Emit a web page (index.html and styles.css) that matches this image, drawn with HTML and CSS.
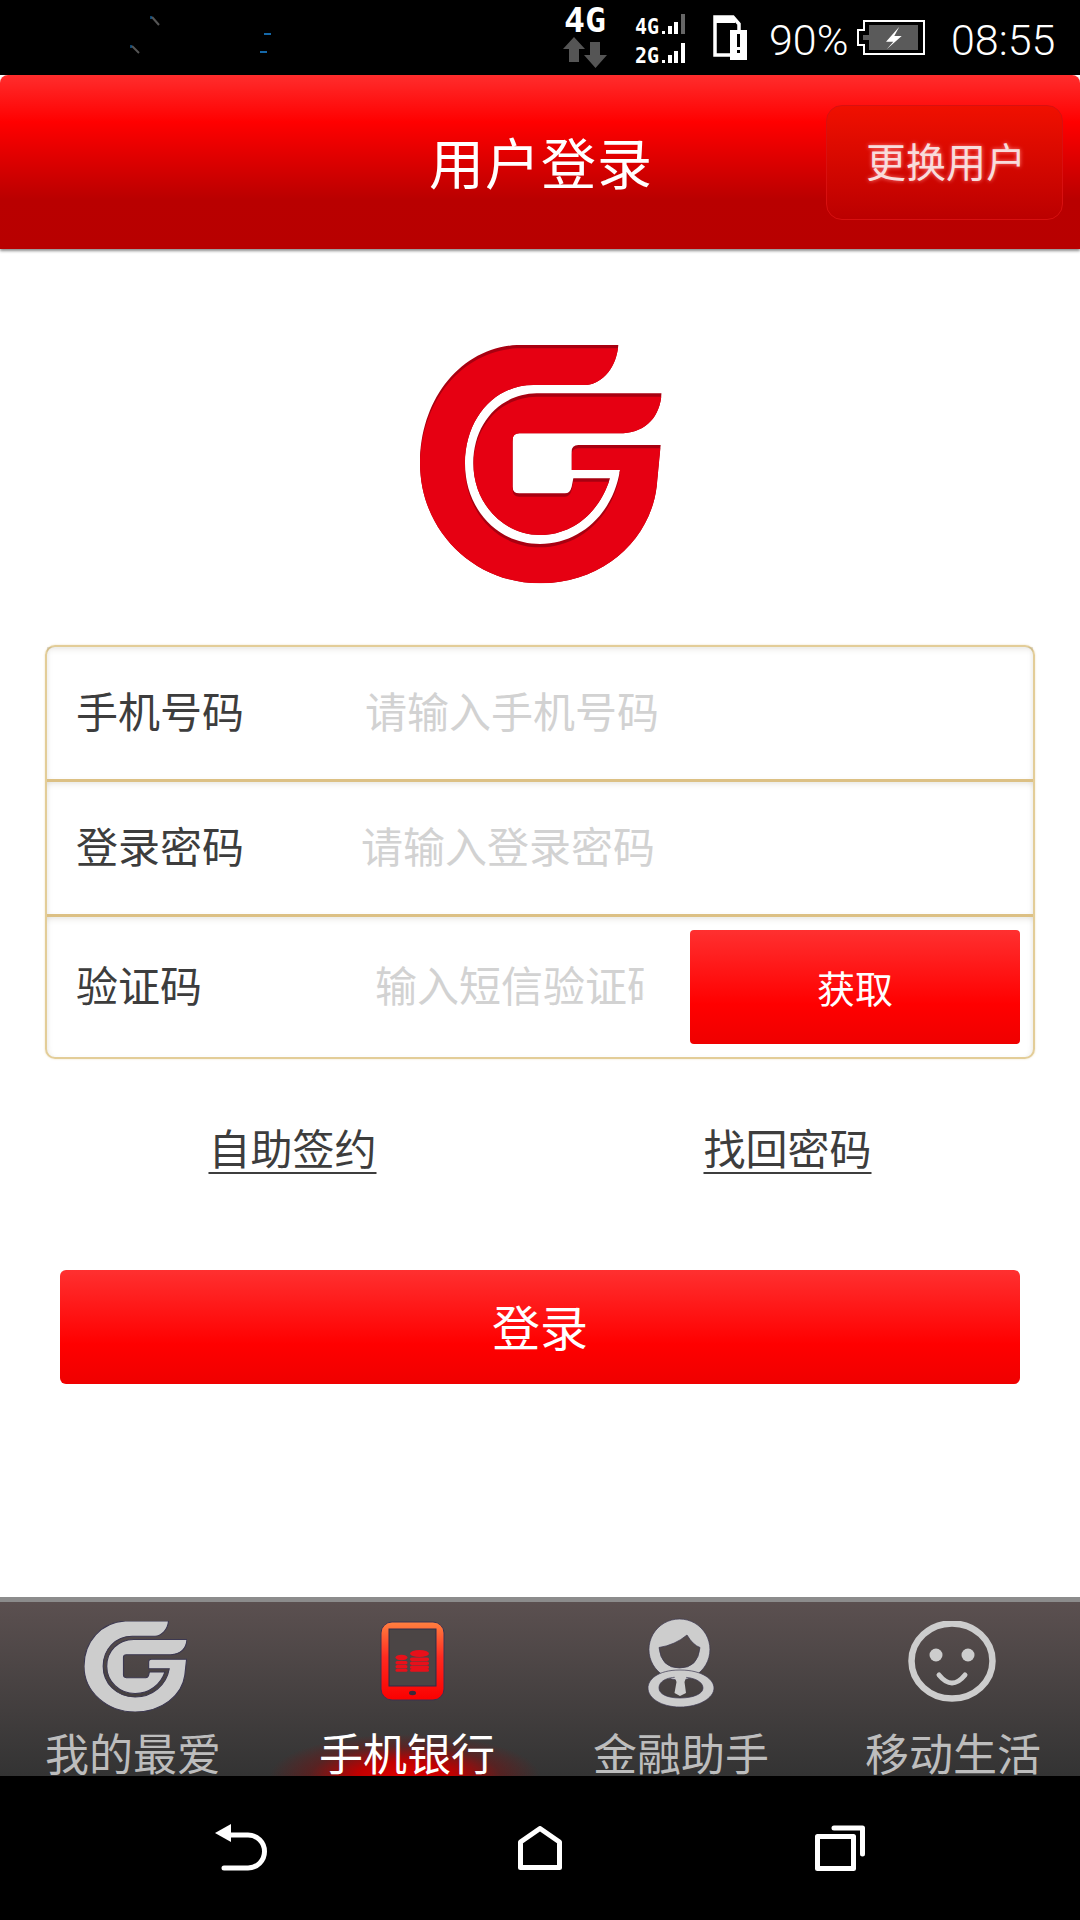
FILE: index.html
```html
<!DOCTYPE html>
<html lang="zh-CN">
<head>
  <meta charset="UTF-8">
  <meta name="viewport" content="width=device-width, initial-scale=1.0">
  <title>用户登录</title>
  <link rel="stylesheet" href="styles.css">
</head>
<body>
  <!-- shared G mark, used by the big logo and the first tab -->
  <svg class="defs" width="0" height="0">
    <defs>
      <path id="gOuter" d="M685 75 H380 C210 85 90 240 90 430 C90 630 250 790 450 790 C640 790 780 660 800 500 L812 375 H565 Q545 375 545 395 V450 H690 C670 580 570 672 450 672 C320 672 225 565 225 430 C225 300 310 195 430 195 H590 C640 190 680 140 685 75 Z"/>
      <path id="gInner" d="M815 220 H440 C330 222 250 310 250 430 C250 550 340 645 450 645 C550 645 630 575 660 475 H550 L545 500 Q540 520 525 520 H388 Q368 520 368 500 V360 Q368 340 388 340 H700 C770 335 810 290 815 220 Z"/>
      <clipPath id="gClip">
        <use href="#gOuter"/>
        <use href="#gInner"/>
      </clipPath>
    </defs>
  </svg>

  <div class="status-bar">
    <!-- leftover notification specks -->
    <svg class="status-specks" width="145" height="75" viewBox="0 0 145 75">
      <path d="M22 17 L29 25" stroke="#555" stroke-width="2"/>
      <path d="M21 16 V19" stroke="#1d8be0" stroke-width="1"/>
      <path d="M2 46 L9 53" stroke="#555" stroke-width="2"/>
      <path d="M1 45 V48" stroke="#1d8be0" stroke-width="1"/>
      <path d="M134 34 H141" stroke="#1d8be0" stroke-width="1.5"/>
      <path d="M130 52 H137" stroke="#1d8be0" stroke-width="1.5"/>
    </svg>

    <svg class="status-net" width="44" height="68" viewBox="0 -8 44 68">
      <text class="net-type" x="1" y="24" textLength="42" lengthAdjust="spacingAndGlyphs">4G</text>
      <polygon fill="#555" points="11,29 22,41 16,41 16,54 6,54 6,41 0,41"/>
      <polygon fill="#555" points="27,34 37,34 37,47 44,47 32.5,60 21,47 27,47"/>
    </svg>

    <svg class="status-signal" width="50" height="66" viewBox="0 -8 50 66">
      <text class="signal-type" x="0" y="21" textLength="24" lengthAdjust="spacingAndGlyphs">4G</text>
      <rect fill="#fff" x="27" y="18" width="3" height="3"/>
      <rect fill="#fff" x="33" y="13" width="4" height="8"/>
      <rect fill="#fff" x="39" y="9" width="4" height="12"/>
      <rect fill="#666" x="46" y="1" width="4" height="20"/>
      <text class="signal-type" x="0" y="50" textLength="24" lengthAdjust="spacingAndGlyphs">2G</text>
      <rect fill="#fff" x="27" y="47" width="3" height="3"/>
      <rect fill="#fff" x="33" y="42" width="4" height="8"/>
      <rect fill="#fff" x="39" y="38" width="4" height="12"/>
      <rect fill="#fff" x="46" y="30" width="4" height="20"/>
    </svg>

    <svg class="status-sim" width="34" height="45" viewBox="0 0 34 45">
      <path d="M2 2 H20 L26 9 V40 H2 Z" fill="none" stroke="#fff" stroke-width="3.5"/>
      <rect fill="#fff" x="2" y="2" width="20" height="6"/>
      <rect fill="#fff" x="17" y="15" width="17" height="30"/>
      <rect fill="#000" x="24" y="19" width="3" height="13"/>
      <rect fill="#000" x="24" y="35" width="3" height="3"/>
    </svg>

    <span class="status-battery-text">90%</span>

    <svg class="status-battery" width="68" height="35" viewBox="0 0 68 35">
      <path d="M7 1 H67 V34 H7 V25 H1 V10 H7 Z" fill="none" stroke="#fff" stroke-width="2"/>
      <rect fill="#5a5a5a" x="12" y="5" width="49" height="25"/>
      <rect fill="#5a5a5a" x="6" y="15" width="6" height="5"/>
      <polygon fill="#fff" points="42.3,6.7 29,21.7 36.3,21.7 29.7,29.3 44.7,16 37.3,16"/>
    </svg>

    <span class="status-time">08:55</span>
  </div>

  <header class="top-bar">
    <span></span>
    <h1 class="top-title">用户登录</h1>
    <button class="switch-user" type="button">更换用户</button>
  </header>

  <main class="login">
    <svg class="logo" width="300" height="280" viewBox="0 0 900 840">
      <g clip-path="url(#gClip)">
        <rect width="900" height="840" fill="#a80010"/>
        <use href="#gOuter" y="10" fill="#e60012"/>
        <use href="#gInner" y="10" fill="#e60012"/>
      </g>
    </svg>

    <form class="login-form">
      <div class="form-row">
        <label class="form-label">手机号码</label>
        <input class="form-input input-phone" type="text" placeholder="请输入手机号码">
      </div>
      <div class="form-row">
        <label class="form-label">登录密码</label>
        <input class="form-input input-pass" type="text" placeholder="请输入登录密码">
      </div>
      <div class="form-row form-row-code">
        <label class="form-label">验证码</label>
        <input class="form-input input-code" type="text" placeholder="输入短信验证码">
        <button class="red-btn get-code" type="button">获取</button>
      </div>
    </form>

    <div class="login-links">
      <a class="login-link" href="#">自助签约</a>
      <a class="login-link" href="#">找回密码</a>
    </div>

    <button class="red-btn submit" type="button">登录</button>
  </main>

  <nav class="tabs">
    <a class="tab tab-fav">
      <svg class="tab-icon" width="103" height="91" viewBox="90 75 725 715" preserveAspectRatio="none">
        <use href="#gOuter" fill="#cdcdcd" stroke="#3c3850" stroke-width="8"/>
        <use href="#gInner" fill="#cdcdcd" stroke="#3c3850" stroke-width="8"/>
      </svg>
      <span class="tab-label">我的最爱</span>
    </a>
    <a class="tab tab-bank">
      <svg class="tab-icon" width="90" height="91" viewBox="0 5 90 91">
        <defs>
          <linearGradient id="phoneBody" x1="0" y1="0" x2="0" y2="1">
            <stop offset="0" stop-color="#ff8040"/>
            <stop offset="0.45" stop-color="#ff2a20"/>
            <stop offset="1" stop-color="#fa0000"/>
          </linearGradient>
        </defs>
        <g transform="translate(8 -6)">
          <rect x="11" y="12" width="63" height="78" rx="11" fill="url(#phoneBody)" stroke="#3a3350" stroke-width="1"/>
          <rect x="19" y="19" width="47" height="57" fill="#4b4545" stroke="#2f2c48" stroke-width="1"/>
          <ellipse cx="42.5" cy="83" rx="3.5" ry="2.2" fill="#3a2a3a"/>
          <g fill="#e8101a">
            <ellipse cx="31.5" cy="47.5" rx="6" ry="2.8"/>
            <rect x="25.5" y="51" width="12" height="3.4" rx="1.7"/>
            <rect x="25.5" y="55" width="12" height="3.4" rx="1.7"/>
            <rect x="25.5" y="59" width="12" height="2.8" rx="1.4"/>
            <ellipse cx="49.5" cy="43.5" rx="9.5" ry="3.6"/>
            <rect x="40" y="47.5" width="19" height="3.4" rx="1.7"/>
            <rect x="40" y="51.5" width="19" height="3.4" rx="1.7"/>
            <rect x="40" y="55.5" width="19" height="3.4" rx="1.7"/>
            <rect x="40" y="59" width="19" height="2.8" rx="1.4"/>
          </g>
        </g>
      </svg>
      <span class="tab-label">手机银行</span>
    </a>
    <a class="tab tab-help">
      <svg class="tab-icon" width="90" height="94" viewBox="0 8 90 94">
        <g fill="#cdcdcd" stroke="#3c3850" stroke-width="0.7" fill-rule="evenodd">
          <path d="M44.5 9 A30.5 30.5 0 1 1 44.4 9 Z M24 37.5 Q40 35 52 25 Q58 35 65 37.5 Q63 58 44.5 58 Q26 58 24 37.5 Z"/>
          <path d="M45 60 C68 60 79 70 79 78 C79 88 64 97 45 97 C26 97 13 88 13 78 C13 70 22 60 45 60 Z M45 67 C30 67 24 72 24 78 C24 84 32 88 45 88 C58 88 68 84 68 78 C68 72 60 67 45 67 Z"/>
        </g>
        <polygon fill="#cdcdcd" points="39,65 52,65 49.5,72 51,83 45,86 39.5,83 41.5,72"/>
      </svg>
      <span class="tab-label">金融助手</span>
    </a>
    <a class="tab tab-life">
      <svg class="tab-icon" width="90" height="91" viewBox="0 0 90 91">
        <ellipse cx="44" cy="40" rx="40.5" ry="37.5" fill="none" stroke="#cdcdcd" stroke-width="6.5"/>
        <circle cx="28" cy="34" r="6.5" fill="#cdcdcd"/>
        <circle cx="60" cy="34" r="6.5" fill="#cdcdcd"/>
        <path d="M31 54 Q44 70 57 54" fill="none" stroke="#cdcdcd" stroke-width="5" stroke-linecap="round"/>
      </svg>
      <span class="tab-label">移动生活</span>
    </a>
  </nav>

  <div class="nav-bar">
    <svg class="nav-icon nav-back" width="52" height="48" viewBox="0 0 52 48">
      <polygon fill="#fff" points="0,9 16,0 16,18"/>
      <path d="M14 11 H33 A16.5 16.5 0 0 1 33 44 H9" fill="none" stroke="#fff" stroke-width="5" stroke-linecap="round"/>
    </svg>
    <svg class="nav-icon nav-home" width="44" height="44" viewBox="0 0 44 44">
      <path d="M2.5 41.5 V16 L22 2.5 L41.5 16 V41.5 Z" fill="none" stroke="#fff" stroke-width="5" stroke-linejoin="round"/>
    </svg>
    <svg class="nav-icon" width="50" height="46" viewBox="0 0 50 46">
      <rect x="2.5" y="11.5" width="36" height="32" fill="none" stroke="#fff" stroke-width="5" stroke-linejoin="round"/>
      <path d="M19 3 H47.5 V29" fill="none" stroke="#fff" stroke-width="5" stroke-linecap="round" stroke-linejoin="round"/>
    </svg>
  </div>
</body>
</html>
```

FILE: styles.css
```css
* {
  box-sizing: border-box;
}

html, body {
  margin: 0;
  padding: 0;
  background: #ffffff;
}

body {
  width: 1080px;
  height: 1920px;
  overflow: hidden;
  display: flex;
  flex-direction: column;
  font-family: "Noto Sans CJK SC", "Liberation Sans", sans-serif;
  color: #3d3d3d;
}

.defs {
  display: block;
  height: 0;
}

/* Status bar */
.status-bar {
  flex: none;
  height: 75px;
  background: #000000;
  display: flex;
  align-items: flex-start;
  color: #ffffff;
}

.status-specks {
  margin-left: 130px;
}

.status-net {
  margin: 0 0 0 288px;
}

.net-type {
  font-family: "DejaVu Sans Mono", monospace;
  font-weight: bold;
  font-size: 33px;
  fill: #ffffff;
}

.status-signal {
  margin: 5px 0 0 28px;
}

.signal-type {
  font-family: "DejaVu Sans Mono", monospace;
  font-weight: bold;
  font-size: 21px;
  fill: #ffffff;
}

.status-sim {
  margin: 15px 0 0 28px;
}

.status-battery-text {
  margin-left: 22px;
  width: 88px;
  font-family: Roboto, sans-serif;
  font-weight: 300;
  font-size: 43px;
  line-height: 80px;
}

.status-battery {
  margin-top: 20px;
}

.status-time {
  margin-left: 26px;
  font-family: Roboto, sans-serif;
  font-weight: 300;
  font-size: 43px;
  line-height: 80px;
}

/* Red header */
.top-bar {
  flex: none;
  height: 174px;
  display: grid;
  grid-template-columns: 1fr auto 1fr;
  align-items: center;
  border-radius: 8px 8px 0 0;
  background: linear-gradient(#ff2d2d 0%, #ff0000 27%, #b90000 72%, #b80000 100%);
  box-shadow: 0 2px 3px rgba(0, 0, 0, 0.45);
  position: relative;
}

.top-title {
  margin: 0;
  padding: 0 0 4px 2px;
  font-size: 55px;
  font-weight: 400;
  color: #ffffff;
  letter-spacing: 1px;
}

.switch-user {
  justify-self: end;
  width: 237px;
  height: 115px;
  margin-right: 17px;
  padding: 0 0 5px 3px;
  border: 1px solid #d81010;
  border-radius: 16px;
  background: linear-gradient(#f01000, #bb0000);
  font-family: inherit;
  font-size: 40px;
  color: #f8dcdc;
  text-shadow: 0 0 4px #ff8080;
}

/* Login form */
.login {
  flex: 1;
  display: flex;
  flex-direction: column;
  align-items: center;
}

.logo {
  flex: none;
  margin-top: 71px;
}

.login-form {
  width: 990px;
  margin-top: 45px;
  border: 2px solid #e3cd98;
  border-radius: 10px;
  box-shadow: 0 0 2px rgba(227, 205, 152, 0.7);
}

.form-row {
  height: 135px;
  display: flex;
  align-items: center;
  padding: 0 0 0 29px;
  border-bottom: 3px solid #dcc084;
  box-shadow: inset 0 6px 6px -4px rgba(120, 110, 90, 0.16), inset 4px 0 5px -3px rgba(120, 110, 90, 0.14), inset -4px 0 5px -3px rgba(120, 110, 90, 0.14);
}

.form-row-code {
  height: 140px;
  border-bottom: 0;
  border-radius: 0 0 8px 8px;
}

.form-label {
  width: 289px;
  margin-bottom: 8px;
  font-size: 42px;
  flex: none;
  white-space: nowrap;
}

.form-input {
  border: 0;
  outline: none;
  padding: 0;
  margin-bottom: 8px;
  background: transparent;
  font-family: inherit;
  font-size: 42px;
  color: #3d3d3d;
  min-width: 0;
}

.form-input::placeholder {
  color: #d2d2d2;
  opacity: 1;
}

.input-phone {
  flex: 1;
}

.input-pass {
  flex: 1;
  margin-left: -4px;
}

.input-code {
  width: 269px;
  margin-left: 10px;
  margin-right: 46px;
}

/* Red gradient buttons */
.red-btn {
  border: 0;
  padding: 0;
  background: linear-gradient(#ff3030 0%, #ff0000 65%, #ef0000 100%);
  color: #ffffff;
  font-family: inherit;
  border-radius: 6px;
}

.get-code {
  width: 330px;
  height: 114px;
  padding-bottom: 2px;
  font-size: 38px;
  border-radius: 4px;
}

.login-links {
  width: 100%;
  margin-top: 58px;
  display: grid;
  grid-template-columns: 495px 495px;
  justify-content: center;
}

.login-link {
  justify-self: center;
  font-size: 42px;
  line-height: 60px;
  color: #3d3d3d;
  text-decoration: underline;
  text-decoration-thickness: 2px;
  text-underline-offset: 7px;
}

.submit {
  width: 960px;
  height: 114px;
  margin-top: 93px;
  padding-bottom: 5px;
  font-size: 48px;
}

/* Bottom tabs */
.tabs {
  flex: none;
  height: 179px;
  display: grid;
  grid-template-columns: repeat(4, 270px);
  border-top: 5px solid #8c8c8c;
  background: linear-gradient(#5b5050 0%, #333333 100%);
}

.tab {
  display: flex;
  flex-direction: column;
  align-items: center;
  padding-top: 19px;
}

.tab-icon {
  flex: none;
  filter: blur(0.4px);
}

.tab-label {
  margin-top: 18px;
  font-size: 44px;
  line-height: 44px;
  color: #bdbdbd;
  white-space: nowrap;
}

.tab-bank {
  background: radial-gradient(ellipse 135px 42px at 50% 100%, #dd0000 0%, #c00000 35%, rgba(150, 0, 0, 0.35) 70%, rgba(150, 0, 0, 0) 100%);
}

.tab-bank .tab-label {
  color: #ffffff;
}

.tab-fav .tab-label {
  margin-right: 4px;
}

.tab-bank .tab-icon,
.tab-bank .tab-label {
  margin-left: 4px;
}

.tab-help .tab-label {
  margin-left: 12px;
}

.tab-help .tab-icon {
  margin: -3px 0 0 10px;
}

.tab-life .tab-label,
.tab-life .tab-icon {
  margin-left: 16px;
}

/* Android nav buttons */
.nav-bar {
  flex: none;
  height: 144px;
  background: #000000;
  display: flex;
  align-items: center;
  padding-left: 215px;
}

.nav-back {
  margin-right: 251px;
}

.nav-home {
  margin-right: 253px;
}
```
